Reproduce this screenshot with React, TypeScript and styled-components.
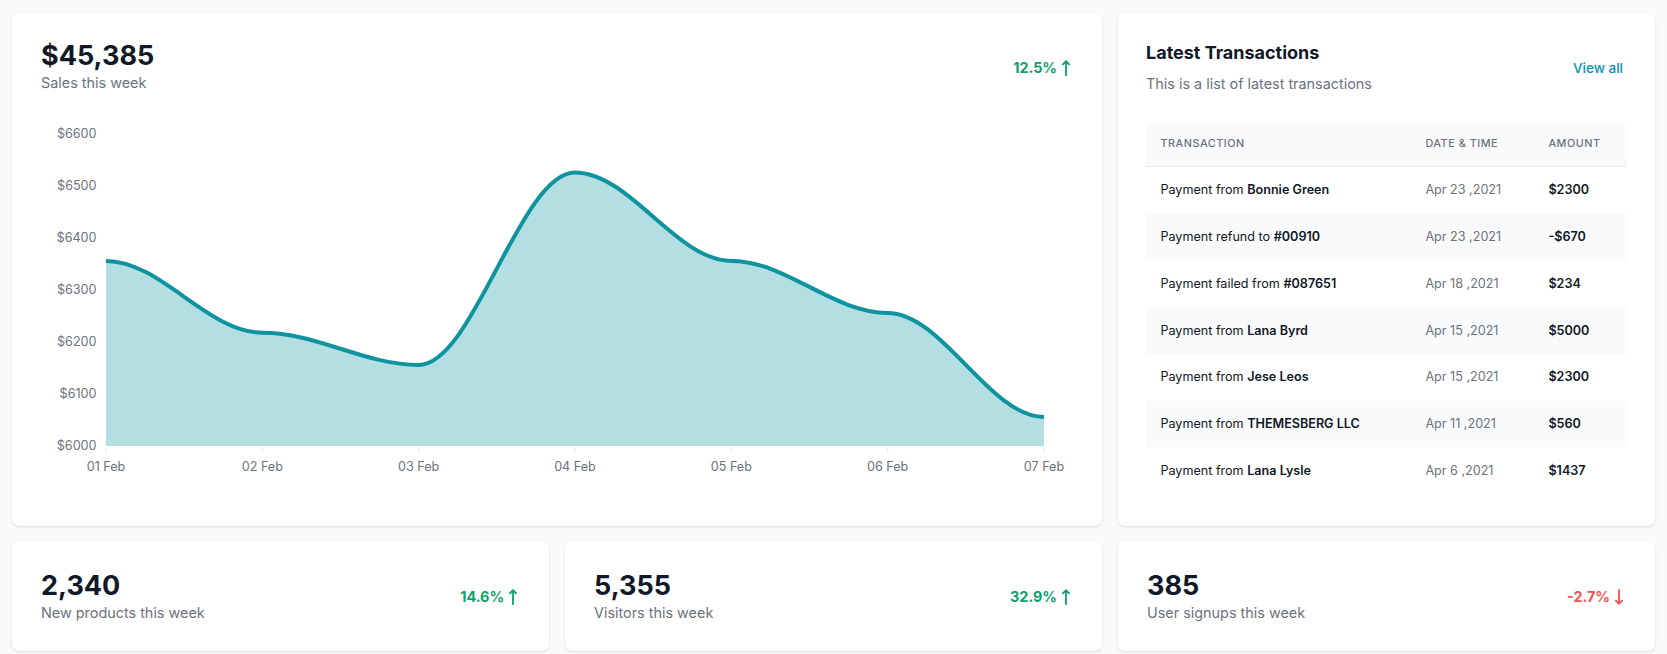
import React from "react";
import styled, {createGlobalStyle} from "styled-components";

const GlobalStyle = createGlobalStyle`
    body {
        margin: 0;
        background: #f9fafb;
        font-family: Inter, "Noto Sans", sans-serif;
        color: #111827;
    }
`;

const sales = [6356, 6218, 6156, 6526, 6356, 6256, 6056];
const days = ["01 Feb", "02 Feb", "03 Feb", "04 Feb", "05 Feb", "06 Feb", "07 Feb"];
const ticks = [6600, 6500, 6400, 6300, 6200, 6100, 6000];

const transactions = [
    {text: "Payment from", who: "Bonnie Green", date: "Apr 23 ,2021", amount: "$2300"},
    {text: "Payment refund to", who: "#00910", date: "Apr 23 ,2021", amount: "-$670"},
    {text: "Payment failed from", who: "#087651", date: "Apr 18 ,2021", amount: "$234"},
    {text: "Payment from", who: "Lana Byrd", date: "Apr 15 ,2021", amount: "$5000"},
    {text: "Payment from", who: "Jese Leos", date: "Apr 15 ,2021", amount: "$2300"},
    {text: "Payment from", who: "THEMESBERG LLC", date: "Apr 11 ,2021", amount: "$560"},
    {text: "Payment from", who: "Lana Lysle", date: "Apr 6 ,2021", amount: "$1437"},
];

const stats = [
    {value: "2,340", label: "New products this week", change: "14.6%", up: true},
    {value: "5,355", label: "Visitors this week", change: "32.9%", up: true},
    {value: "385", label: "User signups this week", change: "-2.7%", up: false},
];

// chart geometry
const W = 1034;
const H = 403;
const LEFT = 65;
const STEP = 156.33;
const BASE = 352;
const yOf = (v: number) => BASE - (v - 6000) * 0.52;

const buildLine = () => {
    const pts = sales.map((v, i) => [LEFT + i * STEP, yOf(v)]);
    let d = `M${pts[0][0]},${pts[0][1]}`;
    for (let i = 1; i < pts.length; i++) {
        const [px, py] = pts[i - 1];
        const [cx, cy] = pts[i];
        const k = (cx - px) * 0.35;
        d += ` C${px + k},${py} ${cx - k},${cy} ${cx},${cy}`;
    }
    return d;
};

const Arrow = ({up}: {up: boolean}) => (
    <svg width="18" height="18" viewBox="0 0 20 20" fill="none" stroke="currentColor" strokeWidth="2" strokeLinecap="round" strokeLinejoin="round">
        {up ? <path d="M10 18V2.5M6.5 6L10 2.5L13.5 6" /> : <path d="M10 2V17.5M6.5 14L10 17.5L13.5 14" />}
    </svg>
);

const SalesChart = () => {
    const line = buildLine();
    const lastX = LEFT + (sales.length - 1) * STEP;
    return (
        <ChartSvg width={W} height={H} viewBox={`0 0 ${W} ${H}`}>
            <path d={`${line} L${lastX},${BASE} L${LEFT},${BASE} Z`} fill="#b3dfe2" />
            <path d={line} fill="none" stroke="#0e939f" strokeWidth="4" strokeLinecap="butt" />
            {ticks.map((t) => (
                <AxisText key={t} x={55.5} y={yOf(t) - 1} textAnchor="end" dominantBaseline="central">
                    ${t}
                </AxisText>
            ))}
            {days.map((d, i) => (
                <g key={d}>
                    <line x1={LEFT + i * STEP} x2={LEFT + i * STEP} y1={BASE + 2} y2={BASE + 7} stroke="#e5e7eb" />
                    <AxisText x={LEFT + i * STEP} y={372} textAnchor="middle" dominantBaseline="central">
                        {d}
                    </AxisText>
                </g>
            ))}
        </ChartSvg>
    );
};

const App = () => (
    <>
        <GlobalStyle />
        <Page>
            <SalesCard>
                <CardHead>
                    <div>
                        <BigNumber>$45,385</BigNumber>
                        <Caption>Sales this week</Caption>
                    </div>
                    <Change up>
                        12.5%
                        <Arrow up />
                    </Change>
                </CardHead>
                <SalesChart />
            </SalesCard>

            <Card>
                <ListHead>
                    <div>
                        <Title>Latest Transactions</Title>
                        <Caption>This is a list of latest transactions</Caption>
                    </div>
                    <ViewAll href="#">View all</ViewAll>
                </ListHead>
                <Table>
                    <colgroup>
                        <col style={{width: 265}} />
                        <col style={{width: 123}} />
                        <col />
                    </colgroup>
                    <thead>
                        <tr>
                            <Th>Transaction</Th>
                            <Th>Date &amp; Time</Th>
                            <Th>Amount</Th>
                        </tr>
                    </thead>
                    <tbody>
                        {transactions.map((t, i) => (
                            <Row key={i} striped={i % 2 === 1}>
                                <Td>
                                    {t.text} <Strong>{t.who}</Strong>
                                </Td>
                                <DateCell>{t.date}</DateCell>
                                <AmountCell>{t.amount}</AmountCell>
                            </Row>
                        ))}
                    </tbody>
                </Table>
            </Card>

            {stats.map((s) => (
                <StatCard key={s.label}>
                    <div>
                        <StatNumber>{s.value}</StatNumber>
                        <Caption>{s.label}</Caption>
                    </div>
                    <Change up={s.up}>
                        {s.change}
                        <Arrow up={s.up} />
                    </Change>
                </StatCard>
            ))}
        </Page>
    </>
);
export default App;

export const Page = styled.div`
    display: grid;
    grid-template-columns: repeat(3, 1fr);
    column-gap: 16px;
    row-gap: 15px;
    padding: 13px 12px 12px;
`;

export const Card = styled.div`
    background: #ffffff;
    border-radius: 7px;
    box-shadow: 0 1px 3px rgba(0, 0, 0, 0.1), 0 1px 2px -1px rgba(0, 0, 0, 0.1);
    padding: 28px;
`;

export const SalesCard = styled(Card)`
    grid-column: span 2;
    padding: 29px 27px 29px 29px;
`;

export const CardHead = styled.div`
    display: flex;
    justify-content: space-between;
    align-items: center;
`;

export const BigNumber = styled.div`
    font-size: 27px;
    font-weight: 700;
    line-height: 28px;
    color: #111827;
`;

export const Caption = styled.div`
    margin-top: 2px;
    font-size: 14.4px;
    line-height: 21.6px;
    color: #6b7280;
`;

export const Change = styled.div<{up?: boolean}>`
    display: flex;
    align-items: center;
    font-size: 14.4px;
    font-weight: 700;
    color: ${({up}) => (up ? "#0e9f6e" : "#f05252")};
`;

export const ChartSvg = styled.svg`
    display: block;
`;

export const AxisText = styled.text`
    font-family: Inter, sans-serif;
    font-size: 12.6px;
    fill: #6b7280;
`;

export const ListHead = styled.div`
    display: flex;
    justify-content: space-between;
    align-items: center;
    padding-top: 1px;

    ${Caption} {
        margin-top: 9px;
    }
`;

export const Title = styled.h3`
    margin: 0;
    font-size: 18px;
    font-weight: 700;
    line-height: 22px;
    color: #111827;
`;

export const ViewAll = styled.a`
    font-size: 13.5px;
    font-weight: 500;
    color: #0891b2;
    text-decoration: none;
    margin-right: 4px;
`;

export const Table = styled.table`
    margin-top: 28px;
    width: 100%;
    table-layout: fixed;
    border-collapse: separate;
    border-spacing: 0;
`;

export const Th = styled.th`
    background: #f9fafb;
    padding: 13.5px 14.4px;
    font-size: 10.8px;
    line-height: 16.2px;
    font-weight: 500;
    letter-spacing: 0.05em;
    text-transform: uppercase;
    text-align: left;
    color: #6b7280;
    border-bottom: 1px solid #e5e7eb;

    &:first-child {
        border-top-left-radius: 7px;
    }

    &:last-child {
        border-top-right-radius: 7px;
    }
`;

export const Row = styled.tr<{striped?: boolean}>`
    background: ${({striped}) => (striped ? "#f9fafb" : "#ffffff")};
`;

export const Td = styled.td`
    padding: 14.4px;
    font-size: 12.6px;
    line-height: 18px;
    color: #111827;
    white-space: nowrap;
`;

export const Strong = styled.span`
    font-weight: 600;
`;

export const DateCell = styled(Td)`
    color: #6b7280;
`;

export const AmountCell = styled(Td)`
    font-weight: 600;
`;

export const StatCard = styled(Card)`
    display: flex;
    justify-content: space-between;
    align-items: center;
    padding: 30px 27px 28px 29px;
`;

export const StatNumber = styled.div`
    font-size: 27px;
    font-weight: 700;
    line-height: 30px;
    color: #111827;
    margin-bottom: -1px;
`;
